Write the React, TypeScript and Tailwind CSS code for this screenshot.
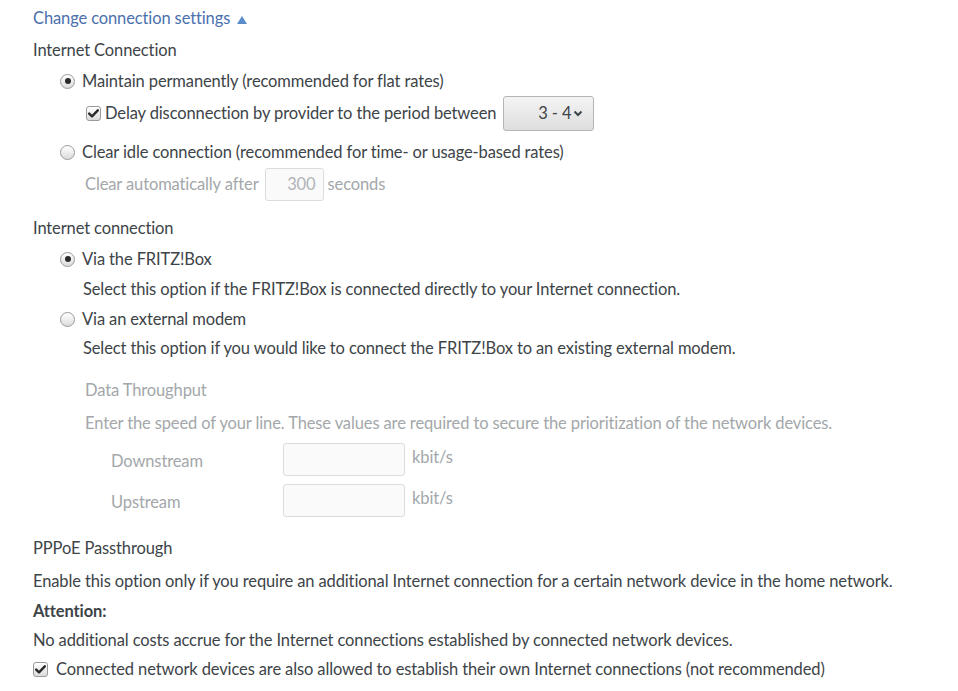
import React from "react";

const font = { fontFamily: "Lato, 'Noto Sans', sans-serif" };

function Radio({ checked }: { checked?: boolean }) {
  return (
    <span className="w-[15px] h-[15px] rounded-full border border-[#9a9a9a] bg-gradient-to-b from-[#ffffff] to-[#dcdcdc] flex items-center justify-center shrink-0">
      {checked && <span className="w-[6px] h-[6px] rounded-full bg-[#2a2a2a]" />}
    </span>
  );
}

function Check() {
  return (
    <span className="w-[15px] h-[15px] rounded-[3px] border border-[#9a9a9a] bg-gradient-to-b from-[#ffffff] to-[#dcdcdc] flex items-center justify-center shrink-0">
      <svg width="11" height="9" viewBox="0 0 11 9">
        <path d="M1.2 4.6 L4 7.3 L9.8 1.3" stroke="#2a2a2a" strokeWidth="2.4" fill="none" strokeLinecap="round" strokeLinejoin="round" />
      </svg>
    </span>
  );
}

export default function App() {
  return (
    <div className="w-[958px] h-[691px] bg-white text-[#3d4448] text-[16.5px] tracking-[-0.12px] overflow-hidden" style={font}>
      <div className="pl-[33px] pt-[1px]">
        <div className="h-[34px] flex items-center text-[#4a70ae]">
          Change connection settings
          <svg className="ml-[7px] mt-[4px]" width="10" height="8" viewBox="0 0 10 8">
            <path d="M0 8 L5 0 L10 8 Z" fill="#5b8ccc" />
          </svg>
        </div>
        <div className="h-[30px] flex items-center">Internet Connection</div>
        <div className="h-[32px] flex items-center pl-[27px] gap-[7px]">
          <Radio checked />
          <span>Maintain permanently (recommended for flat rates)</span>
        </div>
        <div className="h-[33px] flex items-center pl-[53px]">
          <Check />
          <span className="ml-[4px]">Delay disconnection by provider to the period between</span>
          <div className="ml-[7px] w-[91px] h-[35px] rounded-[3px] border border-[#b5b5b5] bg-gradient-to-b from-[#f4f4f4] to-[#dedede] flex items-center justify-end pr-[10px]">
            <span>3 - 4</span>
            <svg className="ml-[2px]" width="10" height="7" viewBox="0 0 10 7">
              <path d="M1.5 1.5 L5 5 L8.5 1.5" stroke="#3d4448" strokeWidth="2" fill="none" />
            </svg>
          </div>
        </div>
        <div className="mt-[7px] h-[30px] flex items-center pl-[27px] gap-[7px]">
          <Radio />
          <span>Clear idle connection (recommended for time- or usage-based rates)</span>
        </div>
        <div className="h-[34px] flex items-center pl-[52px] text-[#a3a7aa]">
          <span>Clear automatically after</span>
          <div className="ml-[6px] w-[59px] h-[33px] rounded-[3px] border border-[#dcdcdc] bg-[#fafafa] flex items-center justify-end pr-[7px] text-[#b0b3b6]">300</div>
          <span className="ml-[4px]">seconds</span>
        </div>
        <div className="mt-[12px] h-[30px] flex items-center">Internet connection</div>
        <div className="h-[32px] flex items-center pl-[27px] gap-[7px]">
          <Radio checked />
          <span>Via the FRITZ!Box</span>
        </div>
        <div className="h-[28px] flex items-center pl-[50px]">Select this option if the FRITZ!Box is connected directly to your Internet connection.</div>
        <div className="h-[32px] flex items-center pl-[27px] gap-[7px]">
          <Radio />
          <span>Via an external modem</span>
        </div>
        <div className="h-[26px] flex items-center pl-[50px]">Select this option if you would like to connect the FRITZ!Box to an existing external modem.</div>
        <div className="pl-[52px] text-[#a3a7aa]">
          <div className="mt-[14px] h-[30px] flex items-center">Data Throughput</div>
          <div className="h-[36px] flex items-center">Enter the speed of your line. These values are required to secure the prioritization of the network devices.</div>
          <div className="mt-[2px] h-[33px] flex items-center pl-[26px]">
            <span className="w-[172px] pt-[4px]">Downstream</span>
            <div className="w-[122px] h-[33px] rounded-[3px] border border-[#dcdcdc] bg-[#fafafa]" />
            <span className="ml-[7px] self-start pt-[2px]">kbit/s</span>
          </div>
          <div className="mt-[8px] h-[33px] flex items-center pl-[26px]">
            <span className="w-[172px] pt-[4px]">Upstream</span>
            <div className="w-[122px] h-[33px] rounded-[3px] border border-[#dcdcdc] bg-[#fafafa]" />
            <span className="ml-[7px] self-start pt-[2px]">kbit/s</span>
          </div>
        </div>
        <div className="mt-[16px] h-[30px] flex items-center">PPPoE Passthrough</div>
        <div className="mt-[3px] h-[30px] flex items-center">Enable this option only if you require an additional Internet connection for a certain network device in the home network.</div>
        <div className="h-[30px] flex items-center font-bold">Attention:</div>
        <div className="h-[28px] flex items-center">No additional costs accrue for the Internet connections established by connected network devices.</div>
        <div className="h-[30px] flex items-center gap-[8px]">
          <Check />
          <span>Connected network devices are also allowed to establish their own Internet connections (not recommended)</span>
        </div>
      </div>
    </div>
  );
}
